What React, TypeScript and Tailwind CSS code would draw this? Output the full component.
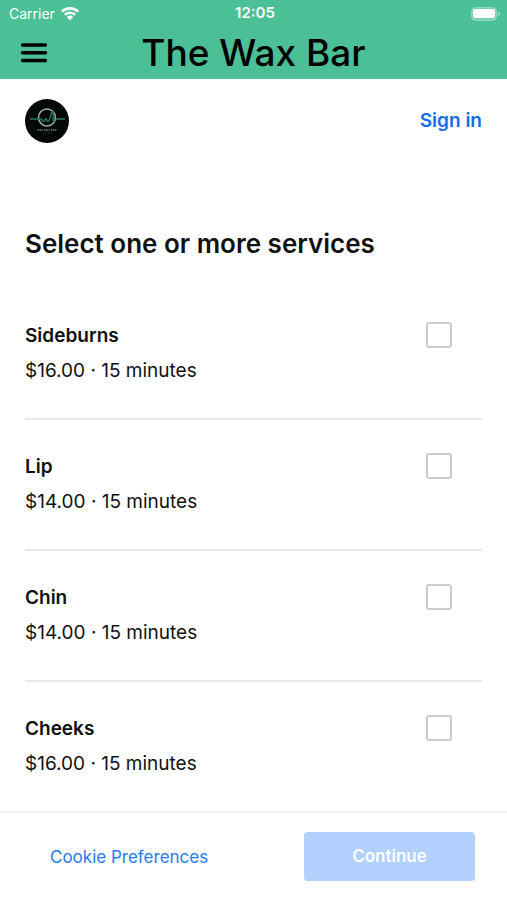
import { useState } from "react";

const SERVICES = [
  { id: "sideburns", name: "Sideburns", price: "$16.00", duration: "15 minutes" },
  { id: "lip", name: "Lip", price: "$14.00", duration: "15 minutes" },
  { id: "chin", name: "Chin", price: "$14.00", duration: "15 minutes" },
  { id: "cheeks", name: "Cheeks", price: "$16.00", duration: "15 minutes" },
];

const WifiIcon = () => (
  <svg width="18" height="14" viewBox="0 0 18 14" fill="white" aria-hidden="true">
    <path d="M9 0C5.600 0 2.400 1.300 0 3.600l1.800 2C3.700 3.700 6.200 2.700 9 2.700s5.300 1 7.200 2.900l1.800-2C15.600 1.300 12.400 0 9 0z" />
    <path d="M9 4.400c-2.300 0-4.400.9-6 2.400l1.800 2C5.900 7.700 7.400 7.100 9 7.100s3.100.6 4.200 1.700l1.800-2c-1.600-1.500-3.700-2.400-6-2.400z" />
    <path d="M9 8.600c-1.200 0-2.300.5-3.100 1.300L9 13.500l3.100-3.600C11.300 9.100 10.200 8.600 9 8.600z" />
  </svg>
);

const BatteryIcon = () => (
  <svg width="30" height="14" viewBox="0 0 30 14" aria-hidden="true">
    <rect x="0.500" y="0.500" width="25" height="13" rx="4" fill="white" fillOpacity="0.250" stroke="white" strokeOpacity="0.300" />
    <rect x="2" y="2" width="22" height="9" rx="2" fill="white" />
    <path d="M27.300 4.800c1 .4 1.600 1.200 1.600 2.200s-.6 1.800-1.600 2.200z" fill="white" fillOpacity="0.500" />
  </svg>
);

const Logo = () => (
  <svg width="44" height="44" viewBox="0 0 44 44" role="img" aria-label="The Wax Bar">
    <circle cx="22" cy="22" r="22" fill="#050807" />
    <circle cx="22" cy="18.500" r="8.500" fill="none" stroke="#9bb5ad" strokeWidth="1.500" />
    <path
      d="M5 20h11c1 0 1 2.500 2.500 2.500s1.500-3 2.500-3 0 3 2 3 2.500-9 4.500-10-.5 10 1.500 10 1.500-2.500 3-2.500h8"
      fill="none"
      stroke="#277c62"
      strokeWidth="1.400"
    />
    <path d="M12.500 31h19" stroke="#71827c" strokeWidth="1.600" strokeDasharray="1.500 0.600 1.500 0.600 1.200 1.300" />
    <path d="M18 34h9" stroke="#26473c" strokeWidth="1" strokeDasharray="1 1.500" />
  </svg>
);

const App = () => {
  const [selected, setSelected] = useState<string[]>([]);

  const onToggleService = (id: string) => {
    setSelected((prev) =>
      prev.includes(id) ? prev.filter((item) => item !== id) : [...prev, id],
    );
  };

  return (
    <div className="flex min-h-screen flex-col bg-white font-['Inter',sans-serif] text-[#111111]">
      <header className="bg-[#4bbf95]">
        {/* status bar */}
        <div className="grid h-[27px] grid-cols-3 items-center pl-[9px] pr-[6px] text-[14px] text-white">
          <div className="flex items-center gap-[6px]">
            <span>Carrier</span>
            <WifiIcon />
          </div>
          <span className="text-center text-[15px] font-semibold">12:05</span>
          <div className="flex justify-end">
            <BatteryIcon />
          </div>
        </div>

        {/* nav */}
        <div className="grid h-[52px] grid-cols-[1fr_auto_1fr] items-center px-5">
          <button type="button" aria-label="Open menu" className="w-fit">
            <svg width="28" height="20" viewBox="0 0 28 20" aria-hidden="true">
              <path d="M2.500 2h23M2.500 9.700h23M2.500 17.500h23" stroke="black" strokeWidth="3.400" strokeLinecap="round" />
            </svg>
          </button>
          <span className="text-[37px] font-medium leading-[52px] text-black">The Wax Bar</span>
        </div>
      </header>

      <main className="flex-1 px-[25px]">
        <div className="flex h-[84px] items-center justify-between">
          <Logo />
          <a href="#" className="text-[19px] font-semibold leading-[28px] text-[#0d6df2]">
            Sign in
          </a>
        </div>

        <h1 className="mt-[61px] text-[26px] font-semibold leading-[40px]">
          Select one or more services
        </h1>

        <ul className="mt-[25px]">
          {SERVICES.map((item) => (
            <li key={item.id} className="border-b-2 border-[#e8e8e8] last:border-b-0">
              <label
                htmlFor={item.id}
                className="flex items-start justify-between py-[33px] pr-[30px] leading-[28px]"
              >
                <span className="flex flex-col gap-[7px] text-[19px]">
                  <span className="font-semibold">{item.name}</span>
                  <span>
                    {item.price} · {item.duration}
                  </span>
                </span>
                <input
                  id={item.id}
                  type="checkbox"
                  checked={selected.includes(item.id)}
                  onChange={() => onToggleService(item.id)}
                  className="size-[26px] appearance-none rounded-[3px] border-2 border-[#cccccc] bg-white checked:border-[#006aff] checked:bg-[#006aff]"
                />
              </label>
            </li>
          ))}
        </ul>
      </main>

      <footer className="sticky bottom-0 flex items-center justify-between border-t-2 border-[#f2f2f2] bg-white pb-5 pl-[50px] pr-8 pt-[19px]">
        <a href="#" className="text-[17px] leading-[28px] text-[#257bf5]">
          Cookie Preferences
        </a>
        <button
          type="button"
          disabled={selected.length === 0}
          className="h-[49px] w-[171px] rounded-[4px] bg-[#006aff] text-[17px] font-semibold text-white disabled:bg-[#b2d1ff]"
        >
          Continue
        </button>
      </footer>
    </div>
  );
};

export default App;
